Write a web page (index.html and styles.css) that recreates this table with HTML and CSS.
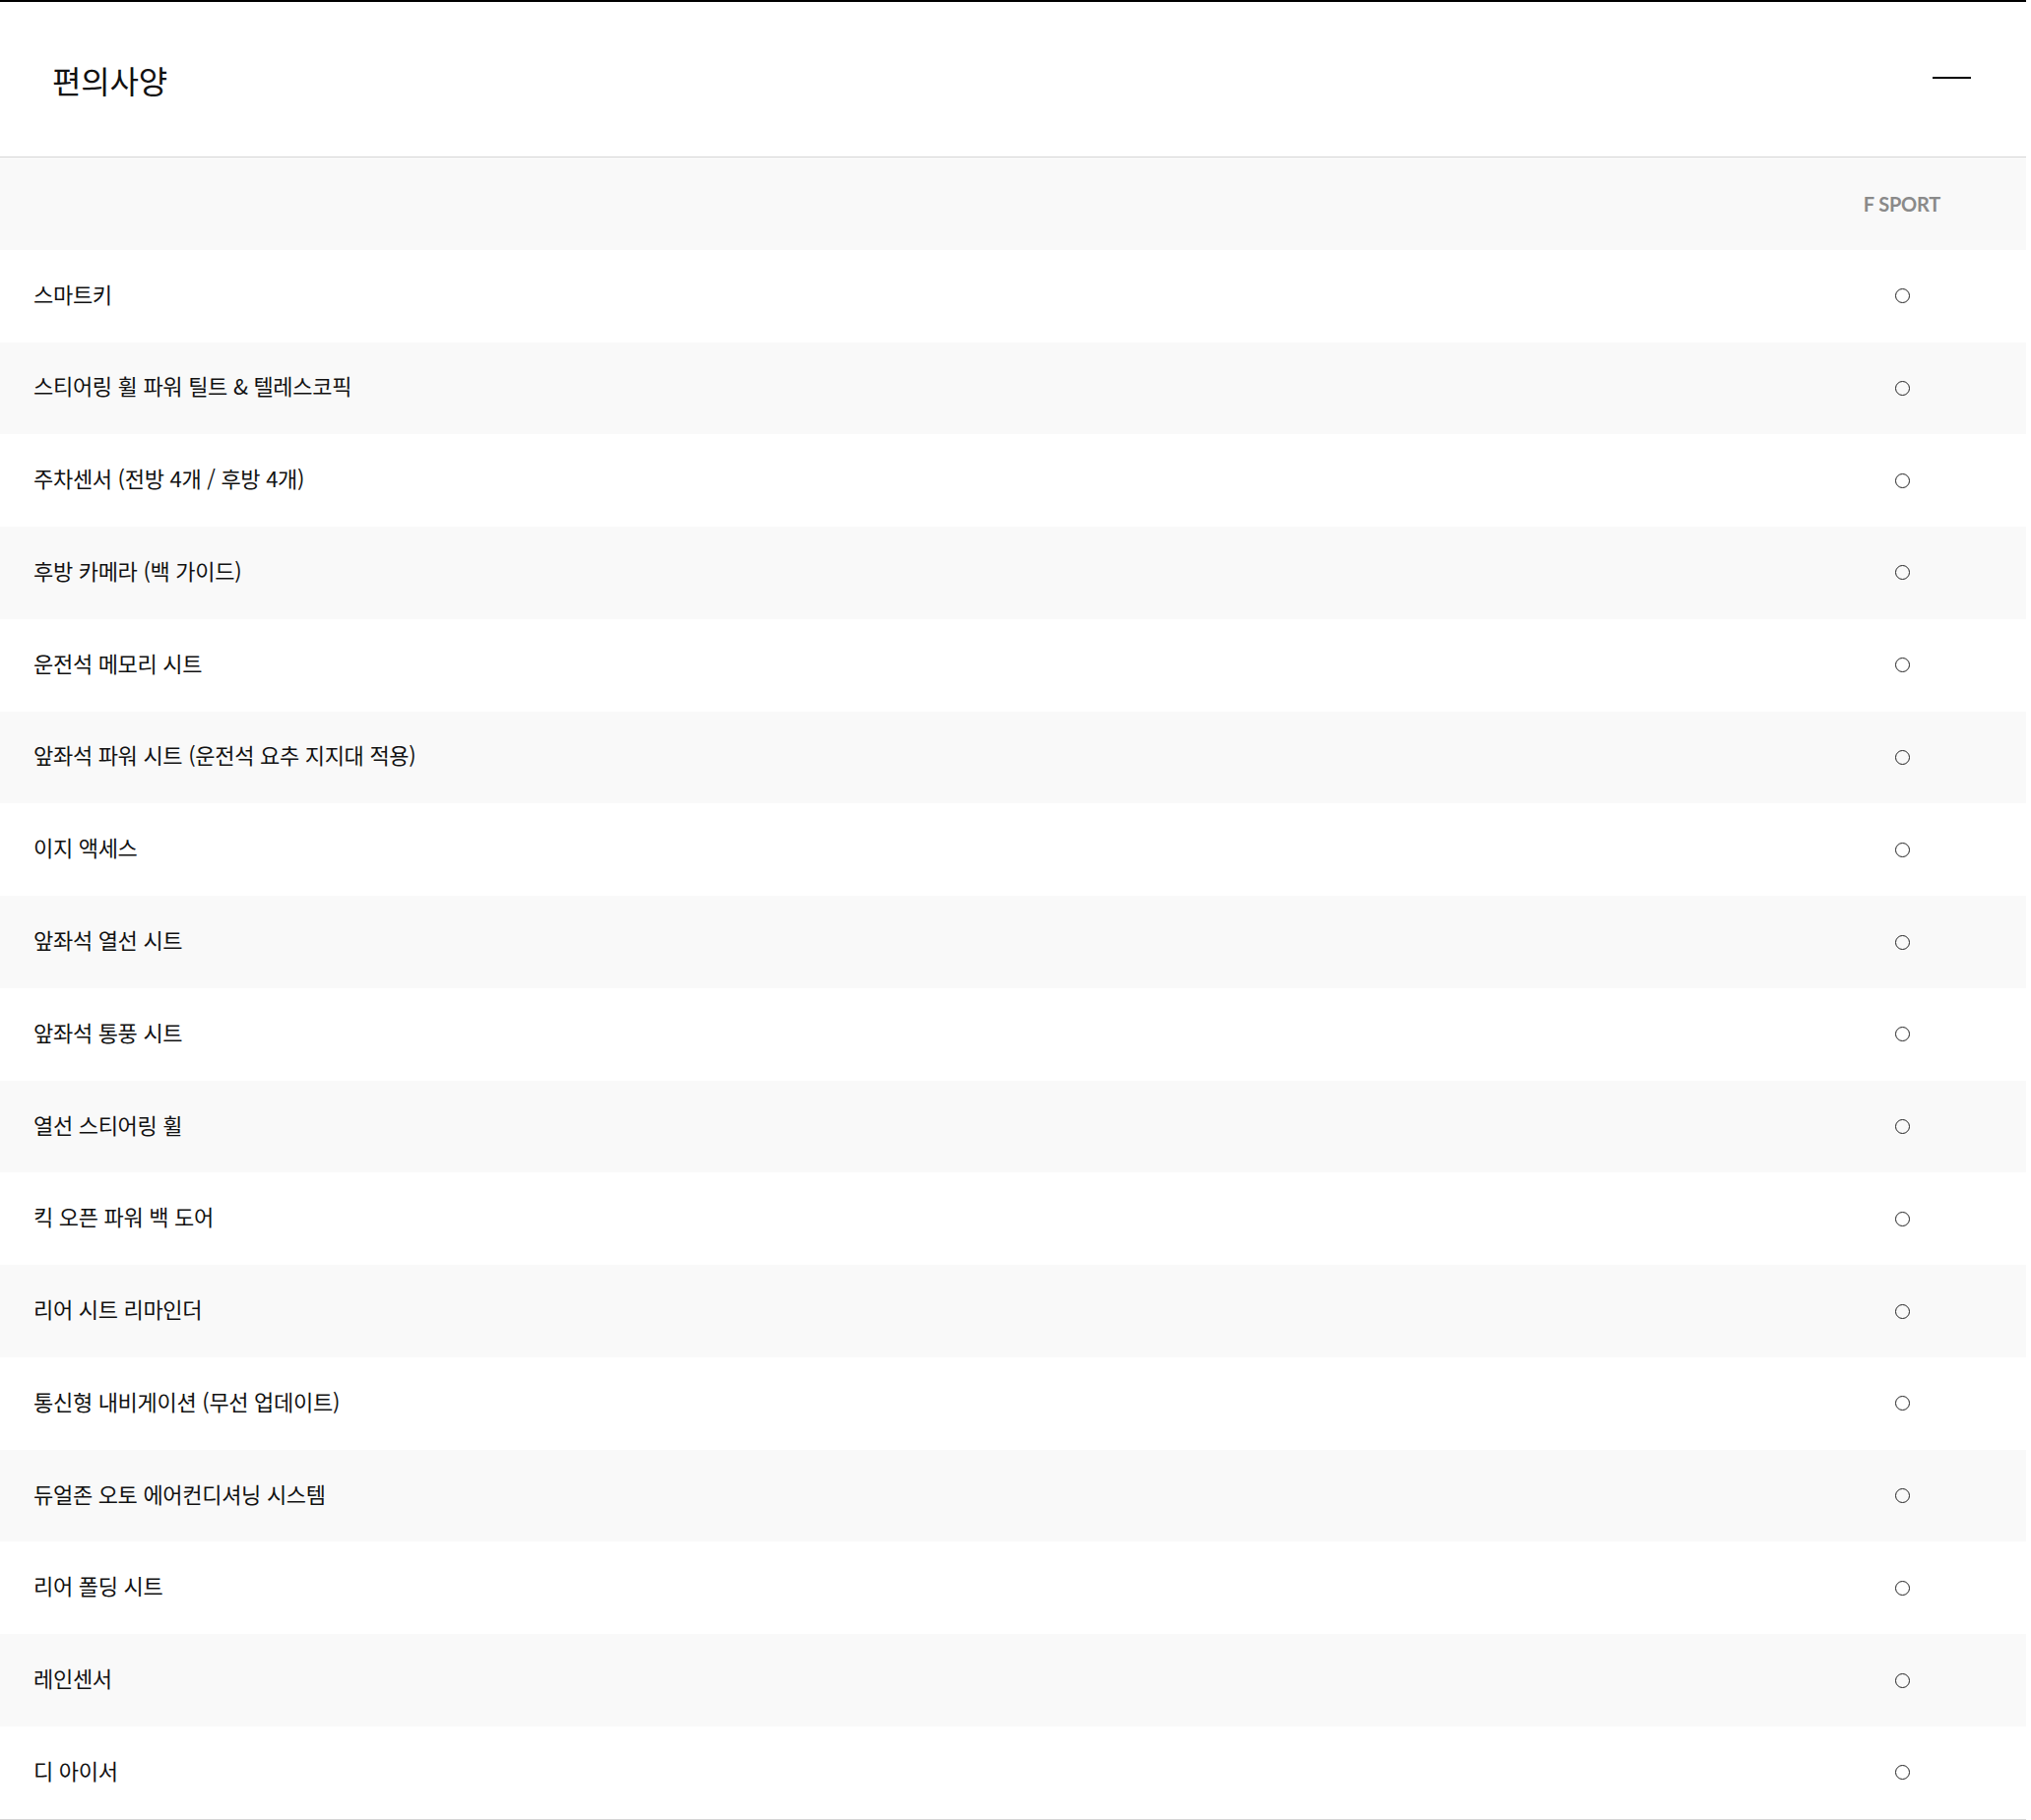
FILE: index.html
```html
<!DOCTYPE html>
<html lang="ko">
<head>
    <meta charset="UTF-8">
    <title>편의사양</title>
    <link rel="stylesheet" href="styles.css">
</head>
<body>

<div class="spec-panel">
    <!-- Header -->
    <div class="spec-header">
        <h2>편의사양</h2>
        <span class="collapse-btn"></span>
    </div>

    <!-- Table -->
    <div class="spec-table">
        <div class="spec-row head">
            <div class="spec-name"></div>
            <div class="spec-value grade">F SPORT</div>
        </div>
        <div class="spec-row"><div class="spec-name">스마트키</div><div class="spec-value"><span class="dot"></span></div></div>
        <div class="spec-row"><div class="spec-name">스티어링 휠 파워 틸트 &amp; 텔레스코픽</div><div class="spec-value"><span class="dot"></span></div></div>
        <div class="spec-row"><div class="spec-name">주차센서 (전방 4개 / 후방 4개)</div><div class="spec-value"><span class="dot"></span></div></div>
        <div class="spec-row"><div class="spec-name">후방 카메라 (백 가이드)</div><div class="spec-value"><span class="dot"></span></div></div>
        <div class="spec-row"><div class="spec-name">운전석 메모리 시트</div><div class="spec-value"><span class="dot"></span></div></div>
        <div class="spec-row"><div class="spec-name">앞좌석 파워 시트 (운전석 요추 지지대 적용)</div><div class="spec-value"><span class="dot"></span></div></div>
        <div class="spec-row"><div class="spec-name">이지 액세스</div><div class="spec-value"><span class="dot"></span></div></div>
        <div class="spec-row"><div class="spec-name">앞좌석 열선 시트</div><div class="spec-value"><span class="dot"></span></div></div>
        <div class="spec-row"><div class="spec-name">앞좌석 통풍 시트</div><div class="spec-value"><span class="dot"></span></div></div>
        <div class="spec-row"><div class="spec-name">열선 스티어링 휠</div><div class="spec-value"><span class="dot"></span></div></div>
        <div class="spec-row"><div class="spec-name">킥 오픈 파워 백 도어</div><div class="spec-value"><span class="dot"></span></div></div>
        <div class="spec-row"><div class="spec-name">리어 시트 리마인더</div><div class="spec-value"><span class="dot"></span></div></div>
        <div class="spec-row"><div class="spec-name">통신형 내비게이션 (무선 업데이트)</div><div class="spec-value"><span class="dot"></span></div></div>
        <div class="spec-row"><div class="spec-name">듀얼존 오토 에어컨디셔닝 시스템</div><div class="spec-value"><span class="dot"></span></div></div>
        <div class="spec-row"><div class="spec-name">리어 폴딩 시트</div><div class="spec-value"><span class="dot"></span></div></div>
        <div class="spec-row"><div class="spec-name">레인센서</div><div class="spec-value"><span class="dot"></span></div></div>
        <div class="spec-row"><div class="spec-name">디 아이서</div><div class="spec-value"><span class="dot"></span></div></div>
    </div>
</div>

</body>
</html>
```

FILE: styles.css
```css
body {
    margin: 0;
    padding: 0;
    background-color: #fff;
    font-family: "Noto Sans CJK KR", "Noto Sans", sans-serif;
    color: #111;
}

.spec-panel {
    width: 2058px;
    border-top: 2px solid #000;
    border-bottom: 1px solid #d6d6d6;
}

.spec-header {
    height: 157px;
    display: flex;
    align-items: center;
    justify-content: space-between;
    padding: 0 56px 0 53px;
    border-bottom: 1px solid #d6d6d6;
}

.spec-header h2 {
    margin: 0;
    font-size: 32px;
    font-weight: 400;
    letter-spacing: -0.2px;
}

.collapse-btn {
    display: block;
    width: 39px;
    height: 2px;
    background-color: #000;
    margin-top: -4px;
}

.spec-row {
    display: grid;
    grid-template-columns: 1fr 252px;
    height: 93.78px;
    align-items: center;
    background-color: #fff;
}

.spec-row:nth-child(odd) {
    background-color: #f9f9f9;
}

.spec-name {
    padding: 0 0 6px 34px;
    font-size: 22px;
    letter-spacing: -0.3px;
}

.spec-value {
    display: flex;
    justify-content: center;
}

.grade {
    font-family: Lato, "Liberation Sans", sans-serif;
    font-weight: 700;
    font-size: 20px;
    color: #8a8a8a;
    letter-spacing: -0.2px;
}

.dot {
    display: block;
    width: 13px;
    height: 13px;
    border: 1.5px solid #222;
    border-radius: 50%;
}
```
